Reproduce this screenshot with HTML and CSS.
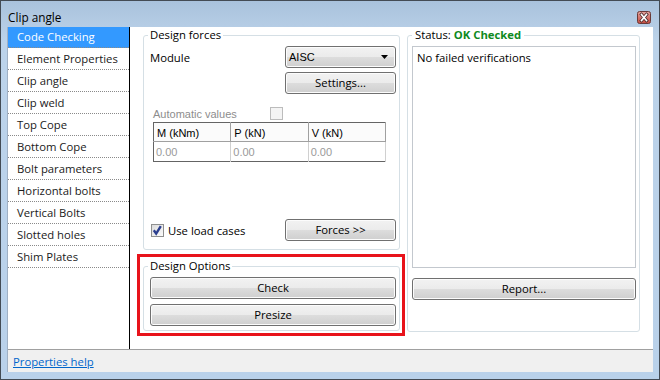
FILE: index.html
```html
<!DOCTYPE html>
<html lang="en">
<head>
    <meta charset="UTF-8">
    <title>Clip angle</title>
    <link rel="stylesheet" href="styles.css">
</head>
<body>
    <div class="window">
        <div class="titlebar">
            <span class="title">Clip angle</span>
            <span class="close">
                <svg width="14" height="13" viewBox="0 0 14 13">
                    <defs>
                        <linearGradient id="cg" x1="0" y1="0" x2="0" y2="1">
                            <stop offset="0" stop-color="#e4a59f"/>
                            <stop offset="0.5" stop-color="#d4746c"/>
                            <stop offset="1" stop-color="#c24a40"/>
                        </linearGradient>
                    </defs>
                    <rect x="0.5" y="0.5" width="13" height="12" rx="2" fill="url(#cg)" stroke="#6a3a38"/>
                    <path d="M4.5 3.5 L9.5 9.5 M9.5 3.5 L4.5 9.5" stroke="#4a2a2a" stroke-width="3.2" stroke-linecap="square"/>
                    <path d="M4.5 3.5 L9.5 9.5 M9.5 3.5 L4.5 9.5" stroke="#ffffff" stroke-width="1.6" stroke-linecap="square"/>
                </svg>
            </span>
        </div>
        <div class="client">
            <div class="main">
                <ul class="nav">
                    <li class="active">Code Checking</li>
                    <li>Element Properties</li>
                    <li>Clip angle</li>
                    <li>Clip weld</li>
                    <li>Top Cope</li>
                    <li>Bottom Cope</li>
                    <li>Bolt parameters</li>
                    <li>Horizontal bolts</li>
                    <li>Vertical Bolts</li>
                    <li>Slotted holes</li>
                    <li>Shim Plates</li>
                </ul>
                <div class="content">
                    <div class="col-left">
                        <fieldset class="group forces">
                            <legend>Design forces</legend>
                            <div class="module-row">
                                <span>Module</span>
                                <div class="combo">
                                    <span>AISC</span>
                                    <svg width="7" height="4" viewBox="0 0 7 4"><path d="M0 0 H7 L3.5 4 Z" fill="#000"/></svg>
                                </div>
                            </div>
                            <button class="btn side">Settings...</button>
                            <div class="auto-row">
                                <span class="auto-label">Automatic values</span>
                                <span class="check disabled"></span>
                            </div>
                            <table class="forces-table">
                                <tr>
                                    <th>M (kNm)</th>
                                    <th>P (kN)</th>
                                    <th>V (kN)</th>
                                </tr>
                                <tr>
                                    <td>0.00</td>
                                    <td>0.00</td>
                                    <td>0.00</td>
                                </tr>
                            </table>
                            <div class="bottom-row">
                                <label class="checkbox">
                                    <span class="check">
                                        <svg width="11" height="11" viewBox="0 0 11 11"><path d="M1.8 5.2 L4.2 8.6 L8.8 1.2" fill="none" stroke="#2b3f8f" stroke-width="2.4"/></svg>
                                    </span>
                                    Use load cases
                                </label>
                                <button class="btn side">Forces &gt;&gt;</button>
                            </div>
                        </fieldset>
                        <div class="highlight">
                            <fieldset class="group options">
                                <legend>Design Options</legend>
                                <button class="btn">Check</button>
                                <button class="btn">Presize</button>
                            </fieldset>
                        </div>
                    </div>
                    <fieldset class="group status">
                        <legend>Status: <strong>OK Checked</strong></legend>
                        <div class="results">No failed verifications</div>
                        <button class="btn">Report...</button>
                    </fieldset>
                </div>
            </div>
            <div class="footer">
                <a href="#">Properties help</a>
            </div>
        </div>
    </div>
</body>
</html>
```

FILE: styles.css
```css
body {
    margin: 0;
    background-color: #ffffff;
    font-family: 'Segoe UI', 'Open Sans', sans-serif;
    font-size: 11.3px;
    color: #000000;
}
.window {
    width: 660px;
    height: 380px;
    box-sizing: border-box;
    border: 1px solid #434b54;
    background: linear-gradient(#a9c2dc, #bcd3ea 40px, #b9d1ea);
    padding: 0 6px 7px 6px;
    display: flex;
    flex-direction: column;
}
.titlebar {
    height: 26px;
    flex: none;
    display: flex;
    align-items: flex-end;
    justify-content: space-between;
    padding: 0 2px 3px 1px;
    box-sizing: border-box;
}
.title {
    font-size: 11.8px;
    line-height: 14px;
}
.close {
    display: block;
    width: 14px;
    height: 13px;
}
.close svg {
    display: block;
}
.client {
    flex: 1;
    border-left: 1px solid #9fb0c4;
    background-color: #ffffff;
    display: flex;
    flex-direction: column;
    min-height: 0;
}
.main {
    flex: 1;
    display: flex;
    min-height: 0;
}
.nav {
    list-style: none;
    margin: 0;
    padding: 0;
    width: 122px;
    box-sizing: border-box;
    border-right: 1px solid #000000;
}
.nav li {
    height: 22px;
    box-sizing: border-box;
    line-height: 20px;
    padding: 1px 0 0 9px;
    border-bottom: 1px dotted #8a8a8a;
    color: #1a1a1a;
    white-space: nowrap;
}
.nav li.active {
    background-color: #3399ff;
    color: #ffffff;
    height: 21px;
    padding-top: 0;
}
.content {
    flex: 1;
    display: flex;
    align-items: flex-start;
    gap: 7px;
    padding: 0 12px 0 13px;
}
.col-left {
    width: 257px;
    display: flex;
    flex-direction: column;
}
.group {
    margin: 0;
    border: 1px solid #d5dfe5;
    border-radius: 3px;
    padding: 3px 3px 4px 6px;
    min-width: 0;
    box-sizing: border-box;
    display: flex;
    flex-direction: column;
}
.group legend {
    padding: 0 2px;
    margin-left: -2px;
    line-height: 16px;
}
.forces {
    height: 223px;
    padding-bottom: 8px;
}
.module-row {
    height: 22px;
    display: flex;
    justify-content: space-between;
    align-items: center;
}
.combo {
    width: 111px;
    height: 22px;
    box-sizing: border-box;
    border: 1px solid #707070;
    border-radius: 3px;
    background: linear-gradient(#f2f2f2 0%, #ebebeb 50%, #dddddd 50%, #cfcfcf 100%);
    box-shadow: inset 0 0 0 1px #fcfcfc;
    display: flex;
    align-items: center;
    justify-content: space-between;
    padding: 0 7px 0 3px;
    font-family: 'Liberation Sans', Arial, sans-serif;
    font-size: 11px;
}
.btn {
    height: 22px;
    box-sizing: border-box;
    border: 1px solid #707070;
    border-radius: 3px;
    background: linear-gradient(#f2f2f2 0%, #ebebeb 50%, #dddddd 50%, #cfcfcf 100%);
    box-shadow: inset 0 0 0 1px #fcfcfc;
    font-family: 'Segoe UI', 'Open Sans', sans-serif;
    font-size: 11.3px;
    color: #000000;
    padding: 0;
    line-height: 18px;
}
.btn.side {
    width: 111px;
}
.forces > .btn.side {
    margin-top: 4px;
    align-self: flex-end;
}
.auto-row {
    margin-top: 13px;
    height: 13px;
    display: flex;
    align-items: center;
    padding-left: 3px;
}
.auto-label {
    width: 117px;
    font-family: 'Liberation Sans', Arial, sans-serif;
    font-size: 11px;
    color: #8d8d8d;
}
.check {
    width: 13px;
    height: 13px;
    box-sizing: border-box;
    border: 1px solid #8e8f8f;
    background: linear-gradient(135deg, #dcdcdc, #fbfbfb);
    display: flex;
    align-items: center;
    justify-content: center;
}
.check svg {
    display: block;
}
.check.disabled {
    border-color: #bcbcbc;
    background: #f4f4f4;
}
.forces-table {
    margin: 2px 0 0 3px;
    width: 233px;
    border-collapse: collapse;
    border: 1px solid #646464;
    font-family: 'Liberation Sans', Arial, sans-serif;
    font-size: 11px;
    table-layout: fixed;
}
.forces-table th {
    height: 17px;
    padding: 1px 0 0 3px;
    text-align: left;
    font-weight: normal;
    background-color: #fbfbfb;
    border-right: 1px solid #a0a0a0;
    border-bottom: 1px solid #a0a0a0;
}
.forces-table td {
    height: 19px;
    padding: 0 0 0 2px;
    color: #9a9a9a;
    border-right: 1px solid #d0d0d0;
}
.bottom-row {
    margin-top: 57px;
    display: flex;
    justify-content: space-between;
    align-items: center;
}
.checkbox {
    display: flex;
    align-items: center;
    gap: 4px;
    padding-left: 1px;
}
.highlight {
    margin: 4px -5px 0 -6px;
    border: 3px solid #e8131b;
    padding: 1px 2px 2px 3px;
}
.options {
    gap: 5px;
}
.status {
    width: 233px;
    height: 305px;
    padding: 3px 3px 31px 4px;
}
.status legend {
    margin-left: 0;
    padding: 0 3px;
}
.status strong {
    color: #0e8a1e;
}
.results {
    flex: 1;
    border: 1px solid #c3c8ce;
    padding: 3px 4px;
    line-height: 16px;
    margin-bottom: 10px;
}
.footer {
    height: 23px;
    flex: none;
    box-sizing: border-box;
    border-top: 1px solid #a0a0a0;
    background-color: #f0f0f0;
    padding-left: 5px;
    display: flex;
    align-items: center;
}
.footer a {
    color: #0066cc;
}
```
